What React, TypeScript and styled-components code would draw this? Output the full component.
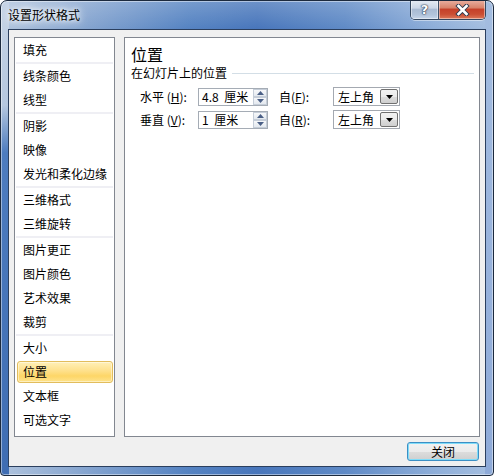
import React from "react";
import styled, { createGlobalStyle } from "styled-components";

const Global = createGlobalStyle`
  html, body { margin: 0; padding: 0; background: #ffffff; }
  body {
    font-family: "Noto Sans CJK SC", "Liberation Sans", sans-serif;
    font-size: 12px;
    color: #000;
  }
  * { box-sizing: border-box; }
`;

const Window = styled.div`
  width: 494px;
  height: 476px;
  border: 1px solid #1c2a3e;
  border-radius: 7px 7px 4px 4px;
  display: flex;
  flex-direction: column;
  padding: 0 7px 8px 7px;
  overflow: hidden;
  background:
    linear-gradient(180deg, #c6d4e6 0%, #b5c7df 22%, #4d7cbf 32%, #3f6db3 100%) left top / 8px 100% no-repeat,
    linear-gradient(180deg, #a4bde0 0%, #8eaad8 100%) right top / 8px 100% no-repeat,
    linear-gradient(180deg, rgba(255, 255, 255, 0.2) 0, rgba(255, 255, 255, 0) 28px),
    linear-gradient(90deg, #afc3dd 0%, #83a3cf 18%, #5583c2 38%, #4876bb 52%, #5f8ac6 70%, #8eaed9 88%, #a6bfe0 100%);
  box-shadow: inset 0 0 0 1px rgba(255, 255, 255, 0.45);
`;

const TitleBar = styled.div`
  flex: none;
  height: 28px;
  display: flex;
  justify-content: space-between;
  align-items: flex-start;
`;

const Title = styled.div`
  margin-top: 6px;
  line-height: 16px;
  font-size: 12px;
  color: #000;
  text-shadow: 0 0 4px #fff, 0 0 8px rgba(255, 255, 255, 0.95), 0 0 12px rgba(255, 255, 255, 0.8);
`;

const CaptionGroup = styled.div`
  display: flex;
  height: 20px;
  margin-top: -1px;
  border: 1px solid #34475f;
  border-top: none;
  border-radius: 0 0 5px 5px;
  overflow: hidden;
  box-shadow: 0 1px 0 rgba(255, 255, 255, 0.45);
`;

const CaptionButton = styled.div<{ $close?: boolean }>`
  width: ${(p) => (p.$close ? 46 : 28)}px;
  height: 100%;
  display: flex;
  align-items: center;
  justify-content: center;
  border-right: ${(p) => (p.$close ? "none" : "1px solid #3d5068")};
  background: ${(p) =>
    p.$close
      ? "linear-gradient(180deg, #eab1a3 0%, #d9846c 40%, #c6412a 50%, #cb4e33 75%, #dc7a5c 100%)"
      : "linear-gradient(180deg, #e6ecf4 0%, #cbd7e7 42%, #a9bbd3 50%, #b2c4db 78%, #c8d7ea 100%)"};
  box-shadow: inset 0 0 0 1px rgba(255, 255, 255, 0.45);
`;

const HelpGlyph = styled.span`
  font-family: "DejaVu Sans", sans-serif;
  font-weight: bold;
  font-size: 13px;
  line-height: 13px;
  color: #fff;
  text-shadow: 0 0 1px #2b3950, 0 0 1px #2b3950, 0 0 2px #2b3950;
`;

const Client = styled.div`
  flex: 1;
  display: flex;
  flex-direction: column;
  background: #f0f0f0;
  border: 1px solid #2b3f5e;
  padding: 7px 5px 5px 5px;
`;

const Main = styled.div`
  display: flex;
  gap: 9px;
  height: 400px;
  flex: none;
`;

const CategoryList = styled.div`
  width: 101px;
  background: #fff;
  border: 1px solid #828790;
  display: flex;
  flex-direction: column;
`;

const Separator = styled.div`
  height: 2px;
  margin: 0 1px;
  background: #efeff4;
`;

const Item = styled.div`
  height: 24px;
  padding: 1px 1px 1px 2px;
  display: flex;
`;

const ItemLabel = styled.div<{ $selected?: boolean }>`
  flex: 1;
  display: flex;
  align-items: center;
  padding-left: 5px;
  line-height: 16px;
  border: 1px solid ${(p) => (p.$selected ? "#e2bd5c" : "transparent")};
  border-radius: 3px;
  background: ${(p) =>
    p.$selected
      ? "linear-gradient(180deg, #fff0b8 0%, #fee08a 45%, #fdd667 70%, #fee38c 100%)"
      : "transparent"};
  box-shadow: ${(p) => (p.$selected ? "inset 0 0 0 1px rgba(255,255,255,0.45)" : "none")};
`;

const Panel = styled.div`
  flex: 1;
  background: #fff;
  border: 1px solid #828790;
  padding: 6px 0 0 6px;
  display: flex;
  flex-direction: column;
`;

const Heading = styled.div`
  font-size: 16px;
  line-height: 20px;
  color: #000;
`;

const SectionRow = styled.div`
  margin-top: 1px;
  display: flex;
  align-items: center;
  line-height: 16px;
`;

const Rule = styled.div`
  flex: 1;
  height: 1px;
  margin: 1px 5px 0 5px;
  background: #d3dee6;
`;

const Form = styled.div`
  margin-top: 6px;
  padding-left: 9px;
  display: grid;
  grid-template-columns: 58px 70px 65px 67px;
  column-gap: 0;
  row-gap: 4px;
  align-items: center;
`;

const Label = styled.div<{ $indent?: number }>`
  line-height: 16px;
  white-space: pre;
  padding-left: ${(p) => p.$indent ?? 0}px;
`;

const Spin = styled.div`
  height: 18px;
  border: 1px solid #a5acb5;
  display: flex;
  padding: 0 0 0 3px;
  background: #fff;
`;

const SpinText = styled.div`
  flex: 1;
  line-height: 16px;
  white-space: pre;
  word-spacing: 3px;
`;

const SpinButtons = styled.div`
  width: 14px;
  display: flex;
  flex-direction: column;
`;

const SpinHalf = styled.div`
  flex: 1;
  display: flex;
  align-items: center;
  justify-content: center;
  border: 1px solid #c5cdd8;
  background: linear-gradient(180deg, #f7f8fa 0%, #e4e9ef 100%);
`;

const Select = styled.div`
  width: 67px;
  height: 19px;
  border: 1px solid #a4a9b1;
  display: flex;
  align-items: center;
  padding: 1px 1px 1px 4px;
  background: #fff;
`;

const SelectText = styled.div`
  flex: 1;
  line-height: 16px;
`;

const SelectButton = styled.div`
  width: 18px;
  height: 15px;
  border: 1px solid #707070;
  border-radius: 2px;
  display: flex;
  align-items: center;
  justify-content: center;
  background: linear-gradient(180deg, #f2f2f2 0%, #ebebeb 50%, #dddddd 51%, #cfcfcf 100%);
`;

const Footer = styled.div`
  margin-top: 5px;
  display: flex;
  justify-content: flex-end;
  padding-right: 1px;
`;

const PushButton = styled.div`
  width: 72px;
  height: 19px;
  border: 1px solid #3c8fc4;
  border-radius: 3px;
  display: flex;
  align-items: center;
  justify-content: center;
  line-height: 16px;
  background: linear-gradient(180deg, #f2f2f2 0%, #ebebeb 50%, #dddddd 51%, #cfcfcf 100%);
  box-shadow: inset 0 0 0 1px #7fdcf9;
`;

const groups: string[][] = [
  ["填充"],
  ["线条颜色", "线型"],
  ["阴影", "映像", "发光和柔化边缘"],
  ["三维格式", "三维旋转"],
  ["图片更正", "图片颜色", "艺术效果", "裁剪"],
  ["大小", "位置", "文本框", "可选文字"],
];

const CloseX = () => (
  <svg width="15" height="12" viewBox="0 0 15 12">
    <path d="M3.5 2 L11.5 10 M11.5 2 L3.5 10" stroke="#2d3a4f" strokeWidth="4.4" strokeLinecap="square" fill="none" />
    <path d="M3.5 2 L11.5 10 M11.5 2 L3.5 10" stroke="#ffffff" strokeWidth="2.6" strokeLinecap="square" fill="none" />
  </svg>
);

const ArrowUp = () => (
  <svg width="7" height="4" viewBox="0 0 7 4">
    <path d="M0 4 L3.5 0 L7 4 Z" fill="#4a5f86" />
  </svg>
);

const ArrowDown = ({ color = "#4a5f86", w = 7, h = 4 }: { color?: string; w?: number; h?: number }) => (
  <svg width={w} height={h} viewBox="0 0 7 4">
    <path d="M0 0 L7 0 L3.5 4 Z" fill={color} />
  </svg>
);

const Spinner = ({ value }: { value: string }) => (
  <Spin>
    <SpinText>{value}</SpinText>
    <SpinButtons>
      <SpinHalf>
        <ArrowUp />
      </SpinHalf>
      <SpinHalf>
        <ArrowDown />
      </SpinHalf>
    </SpinButtons>
  </Spin>
);

const Dropdown = ({ value }: { value: string }) => (
  <Select>
    <SelectText>{value}</SelectText>
    <SelectButton>
      <ArrowDown color="#000" w={7} h={4} />
    </SelectButton>
  </Select>
);

export default function App() {
  return (
    <>
      <Global />
      <Window>
        <TitleBar>
          <Title>设置形状格式</Title>
          <CaptionGroup>
            <CaptionButton>
              <HelpGlyph>?</HelpGlyph>
            </CaptionButton>
            <CaptionButton $close>
              <CloseX />
            </CaptionButton>
          </CaptionGroup>
        </TitleBar>
        <Client>
          <Main>
            <CategoryList>
              {groups.map((g, gi) => (
                <React.Fragment key={gi}>
                  {gi > 0 && <Separator />}
                  {g.map((name) => (
                    <Item key={name}>
                      <ItemLabel $selected={name === "位置"}>{name}</ItemLabel>
                    </Item>
                  ))}
                </React.Fragment>
              ))}
            </CategoryList>
            <Panel>
              <Heading>位置</Heading>
              <SectionRow>
                在幻灯片上的位置
                <Rule />
              </SectionRow>
              <Form>
                <Label>
                  水平 (<u>H</u>):
                </Label>
                <Spinner value="4.8 厘米" />
                <Label $indent={11}>
                  自(<u>F</u>):
                </Label>
                <Dropdown value="左上角" />
                <Label>
                  垂直 (<u>V</u>):
                </Label>
                <Spinner value="1 厘米" />
                <Label $indent={11}>
                  自(<u>R</u>):
                </Label>
                <Dropdown value="左上角" />
              </Form>
            </Panel>
          </Main>
          <Footer>
            <PushButton>关闭</PushButton>
          </Footer>
        </Client>
      </Window>
    </>
  );
}
